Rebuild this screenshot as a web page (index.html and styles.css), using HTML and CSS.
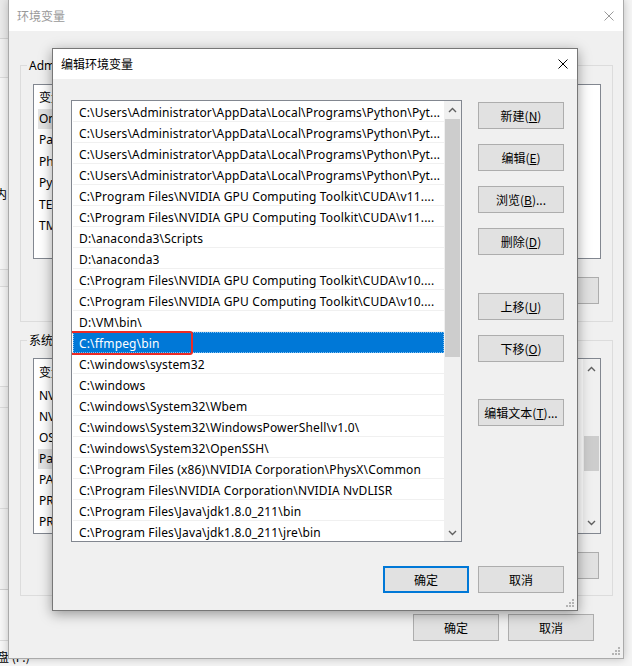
FILE: index.html
```html
<!DOCTYPE html>
<html lang="zh-CN">
<head>
<meta charset="utf-8">
<title>编辑环境变量</title>
<link rel="stylesheet" href="styles.css">
</head>
<body>
<div class="desktop">

  <div class="bgwin">
    <div class="bg-r bg-r1"></div>
    <div class="bg-r bg-r2"></div>
    <div class="bg-r bg-r3"><span class="bg-txt">内</span></div>
    <div class="bg-r bg-r4"></div>
    <div class="bg-r bg-r5"></div>
    <div class="bg-r bg-r6"></div>
    <div class="bg-r bg-r7"></div>
    <div class="bg-r bg-r8"></div>
    <div class="bg-r bg-r9"></div>
    <div class="bg-r bg-r10"><span class="bg-txt">盘 (F:)</span></div>
  </div>

  <section class="win outer">
    <header class="tbar tbar-off">
      <span class="ttl">环境变量</span>
      <svg class="xbtn" width="10" height="10" viewBox="0 0 10 10"><path d="M0.5 0.5L9.5 9.5M9.5 0.5L0.5 9.5" stroke="#9a9a9a" stroke-width="1"/></svg>
    </header>
    <div class="obody">
      <fieldset class="grp grp-user">
        <legend>Administrator 的用户变量(<u>U</u>)</legend>
        <div class="lv lv-user">
          <div class="lv-main">
            <div class="lv-head"><span class="c1">变量</span><span class="c2">值</span></div>
            <div class="lv-row lv-hl"><span class="c1">OneDrive</span><span class="c2">C:\Users\Administrator\OneDrive</span></div>
            <div class="lv-row"><span class="c1">Path</span><span class="c2">C:\Users\Administrator\AppData\Local\Programs\Python</span></div>
            <div class="lv-row"><span class="c1">PhpStorm</span><span class="c2">D:\PhpStorm\bin;</span></div>
            <div class="lv-row"><span class="c1">PyCharm</span><span class="c2">D:\PyCharm\bin;</span></div>
            <div class="lv-row"><span class="c1">TEMP</span><span class="c2">%USERPROFILE%\AppData\Local\Temp</span></div>
            <div class="lv-row"><span class="c1">TMP</span><span class="c2">%USERPROFILE%\AppData\Local\Temp</span></div>
          </div>
        </div>
        <div class="gbtns">
          <button class="btn">新建(<u>N</u>)...</button>
          <button class="btn">编辑(<u>E</u>)...</button>
          <button class="btn">删除(<u>D</u>)</button>
        </div>
      </fieldset>

      <fieldset class="grp grp-sys">
        <legend>系统变量(<u>S</u>)</legend>
        <div class="lv lv-sys">
          <div class="lv-main">
            <div class="lv-head"><span class="c1">变量</span><span class="c2">值</span></div>
            <div class="lv-row"><span class="c1">NVCUDASAMPLES_ROOT</span><span class="c2">C:\ProgramData\NVIDIA Corporation</span></div>
            <div class="lv-row"><span class="c1">NVCUDASAMPLES11_0_ROOT</span><span class="c2">C:\ProgramData\NVIDIA Corporation</span></div>
            <div class="lv-row"><span class="c1">OS</span><span class="c2">Windows_NT</span></div>
            <div class="lv-row lv-hl"><span class="c1">Path</span><span class="c2">C:\Program Files\NVIDIA GPU Computing Toolkit</span></div>
            <div class="lv-row"><span class="c1">PATHEXT</span><span class="c2">.COM;.EXE;.BAT;.CMD;.VBS;.VBE;.JS</span></div>
            <div class="lv-row"><span class="c1">PROCESSOR_ARCHITECTURE</span><span class="c2">AMD64</span></div>
            <div class="lv-row"><span class="c1">PROCESSOR_IDENTIFIER</span><span class="c2">Intel64 Family 6</span></div>
          </div>
          <div class="osb">
            <div class="osb-arrow"><svg width="9" height="6" viewBox="0 0 9 6"><path d="M1 5L4.5 1.5L8 5" fill="none" stroke="#606060" stroke-width="1.4"/></svg></div>
            <div class="osb-track"><div class="osb-thumb"></div></div>
            <div class="osb-arrow"><svg width="9" height="6" viewBox="0 0 9 6"><path d="M1 1L4.5 4.5L8 1" fill="none" stroke="#606060" stroke-width="1.4"/></svg></div>
          </div>
        </div>
        <div class="gbtns">
          <button class="btn">新建(<u>W</u>)...</button>
          <button class="btn">编辑(<u>I</u>)...</button>
          <button class="btn">删除(<u>L</u>)</button>
        </div>
      </fieldset>

      <div class="ofoot">
        <button class="btn">确定</button>
        <button class="btn">取消</button>
      </div>
    </div>
    <svg class="grip" width="10" height="10" viewBox="0 0 10 10" fill="#b4b4b4"><rect x="7" y="1" width="2" height="2"/><rect x="4" y="4" width="2" height="2"/><rect x="7" y="4" width="2" height="2"/><rect x="1" y="7" width="2" height="2"/><rect x="4" y="7" width="2" height="2"/><rect x="7" y="7" width="2" height="2"/></svg>
  </section>

  <section class="win dlg">
    <header class="tbar">
      <span class="ttl">编辑环境变量</span>
      <svg class="xbtn" width="10" height="10" viewBox="0 0 10 10"><path d="M0.5 0.5L9.5 9.5M9.5 0.5L0.5 9.5" stroke="#000" stroke-width="1"/></svg>
    </header>
    <div class="dbody">
      <div class="dmain">
        <div class="plist">
          <div class="prows">
            <div class="prow">C:\Users\Administrator\AppData\Local\Programs\Python\Pyt...</div>
            <div class="prow">C:\Users\Administrator\AppData\Local\Programs\Python\Pyt...</div>
            <div class="prow">C:\Users\Administrator\AppData\Local\Programs\Python\Pyt...</div>
            <div class="prow">C:\Users\Administrator\AppData\Local\Programs\Python\Pyt...</div>
            <div class="prow">C:\Program Files\NVIDIA GPU Computing Toolkit\CUDA\v11....</div>
            <div class="prow">C:\Program Files\NVIDIA GPU Computing Toolkit\CUDA\v11....</div>
            <div class="prow">D:\anaconda3\Scripts</div>
            <div class="prow">D:\anaconda3</div>
            <div class="prow">C:\Program Files\NVIDIA GPU Computing Toolkit\CUDA\v10....</div>
            <div class="prow">C:\Program Files\NVIDIA GPU Computing Toolkit\CUDA\v10....</div>
            <div class="prow">D:\VM\bin\</div>
            <div class="prow psel">C:\ffmpeg\bin<span class="mark"></span></div>
            <div class="prow">C:\windows\system32</div>
            <div class="prow">C:\windows</div>
            <div class="prow">C:\windows\System32\Wbem</div>
            <div class="prow">C:\windows\System32\WindowsPowerShell\v1.0\</div>
            <div class="prow">C:\windows\System32\OpenSSH\</div>
            <div class="prow">C:\Program Files (x86)\NVIDIA Corporation\PhysX\Common</div>
            <div class="prow">C:\Program Files\NVIDIA Corporation\NVIDIA NvDLISR</div>
            <div class="prow">C:\Program Files\Java\jdk1.8.0_211\bin</div>
            <div class="prow">C:\Program Files\Java\jdk1.8.0_211\jre\bin</div>
          </div>
          <div class="psb">
            <div class="sb-arrow"><svg width="9" height="6" viewBox="0 0 9 6"><path d="M1 5L4.5 1.5L8 5" fill="none" stroke="#606060" stroke-width="1.4"/></svg></div>
            <div class="sb-track"><div class="sb-thumb"></div></div>
            <div class="sb-arrow"><svg width="9" height="6" viewBox="0 0 9 6"><path d="M1 1L4.5 4.5L8 1" fill="none" stroke="#606060" stroke-width="1.4"/></svg></div>
          </div>
        </div>
        <div class="pbtns">
          <button class="btn">新建(<u>N</u>)</button>
          <button class="btn">编辑(<u>E</u>)</button>
          <button class="btn">浏览(<u>B</u>)...</button>
          <button class="btn">删除(<u>D</u>)</button>
          <button class="btn gap-a">上移(<u>U</u>)</button>
          <button class="btn">下移(<u>O</u>)</button>
          <button class="btn gap-b">编辑文本(<u>T</u>)...</button>
        </div>
      </div>
      <div class="dfoot">
        <button class="btn btn-def">确定</button>
        <button class="btn">取消</button>
      </div>
    </div>
    <svg class="grip" width="10" height="10" viewBox="0 0 10 10" fill="#b4b4b4"><rect x="7" y="1" width="2" height="2"/><rect x="4" y="4" width="2" height="2"/><rect x="7" y="4" width="2" height="2"/><rect x="1" y="7" width="2" height="2"/><rect x="4" y="7" width="2" height="2"/><rect x="7" y="7" width="2" height="2"/></svg>
  </section>

</div>
</body>
</html>
```

FILE: styles.css
```css
* { box-sizing: border-box; }
html, body { margin: 0; padding: 0; }
body {
  width: 632px;
  height: 666px;
  overflow: hidden;
  background: #f4f4f4;
  font-family: "Noto Sans", "Noto Sans CJK SC", sans-serif;
  font-size: 12px;
  color: #000;
}
u { text-decoration: underline; text-underline-offset: 1px; }

.desktop { position: relative; width: 632px; height: 666px; overflow: hidden; }

/* background window strip on the left */
.bgwin {
  position: absolute;
  left: -300px;
  top: 0;
  width: 360px;
  height: 666px;
  background: #f0f0f0;
  display: flex;
  flex-direction: column;
}
.bg-r { border-bottom: 1px solid #dadada; padding-left: 295px; line-height: 16px; white-space: nowrap; }
.bg-r1 { height: 39px; background: #e9e9e9; border-bottom-color: #d2d2d2; }
.bg-r2 { height: 40px; background: #f0f0f0; }
.bg-r3 { height: 193px; background: #f5f5f5; padding-top: 108px; }
.bg-r4 { height: 17px; background: #f0f0f0; }
.bg-r5 { height: 101px; background: #f5f5f5; }
.bg-r6 { height: 21px; background: #f0f0f0; }
.bg-r7 { height: 102px; background: #f0f0f0; }
.bg-r8 { height: 82px; background: #f0f0f0; border-bottom-color: #cfcfcf; }
.bg-r9 { height: 52px; background: #f6f6f6; }
.bg-r10 { flex: 1; background: #f6f6f6; border-bottom: 0; padding-left: 297px; padding-top: 8px; }
.bg-txt { font-family: "Noto Sans CJK SC", sans-serif; font-size: 12px; color: #000; }

/* windows */
.win {
  position: absolute;
  display: flex;
  flex-direction: column;
  background: #f0f0f0;
}
.outer {
  left: 8px;
  top: 0;
  width: 616px;
  height: 659px;
  border: 1px solid #aaaaaa;
  border-top: 0;
  box-shadow: 0 0 8px rgba(0,0,0,0.22);
}
.dlg {
  left: 52px;
  top: 48px;
  width: 526px;
  height: 563px;
  border: 1px solid #777777;
  box-shadow: 0 3px 12px rgba(0,0,0,0.38);
}

.tbar {
  flex: none;
  height: 30px;
  background: #fff;
  display: flex;
  align-items: center;
  justify-content: space-between;
  padding: 0 9px 0 8px;
  font-family: "Noto Sans CJK SC", sans-serif;
  font-size: 12px;
}
.tbar-off { height: 31px; padding-left: 8px; color: #999; }
.ttl { line-height: 16px; }
.xbtn { display: block; }

.grip { position: absolute; right: 2px; bottom: 2px; }

/* buttons */
.btn {
  flex: none;
  width: 86px;
  height: 27px;
  margin: 0;
  padding: 0;
  background: #e1e1e1;
  border: 1px solid #adadad;
  font-family: "Noto Sans CJK SC", sans-serif;
  font-size: 12px;
  line-height: 16px;
  color: #000;
}
.btn-def { border: 2px solid #0078d7; }

/* outer window body */
.obody {
  flex: 1;
  display: flex;
  flex-direction: column;
  padding: 0;
}
.grp {
  margin: 26px 10px 0 11px;
  padding: 0 11px 17px 12px;
  border: 1px solid #dcdcdc;
  min-width: 0;
  display: flex;
  flex-direction: column;
}
.grp legend {
  margin-left: -6px;
  padding: 0 2px;
  line-height: 17px;
  font-family: "Noto Sans", "Noto Sans CJK SC", sans-serif;
  font-size: 12px;
}
.grp-sys { margin-top: 10px; padding-bottom: 16px; }

.lv {
  flex: none;
  background: #fff;
  border: 1px solid #828790;
  display: flex;
  overflow: hidden;
}
.lv-user { margin-top: 10px; height: 175px; }
.lv-sys { margin-top: 9px; height: 176px; }
.lv-main { flex: 1; min-width: 0; }
.lv-head { display: flex; height: 23px; align-items: center; padding-left: 5px; }
.lv-sys .lv-head { height: 26px; }
.lv-row { display: flex; height: 21.5px; align-items: center; margin-left: 4px; white-space: nowrap; }
.lv-sys .lv-row { height: 21px; }
.lv-row .c1 { padding-left: 1px; height: 20px; line-height: 20px; }
.lv-hl .c1 { background: #e3e3e3; }
.c1 { width: 170px; flex: none; overflow: hidden; }
.c2 { flex: 1; overflow: hidden; padding-left: 6px; }

.osb { flex: none; width: 17px; background: #f0f0f0; display: flex; flex-direction: column; margin-left: 2px; }
.osb-arrow { flex: none; height: 20px; display: flex; align-items: center; justify-content: center; }
.osb-track { flex: 1; padding: 57px 1px 0 1px; }
.osb-thumb { height: 35px; background: #cdcdcd; }

.gbtns { display: flex; justify-content: flex-end; gap: 10px; margin-top: 18px; margin-right: 2px; }

.ofoot { display: flex; justify-content: flex-end; gap: 9px; margin: 18px 29px 0 0; }

/* dialog body */
.dbody {
  flex: 1;
  padding: 21px 13px 0 18px;
  display: flex;
  flex-direction: column;
}
.dmain { display: flex; gap: 16px; align-items: flex-start; }
.plist {
  width: 391px;
  height: 442px;
  flex: none;
  background: #fff;
  border: 1px solid #828790;
  display: flex;
  overflow: hidden;
}
.prows { flex: 1; min-width: 0; padding-left: 1px; }
.prow {
  height: 21px;
  line-height: 19px;
  padding-top: 2px;
  border-bottom: 1px solid #f0f0f0;
  padding-left: 6px;
  white-space: nowrap;
  overflow: hidden;
  letter-spacing: 0.15px;
  font-family: "Noto Sans", "Noto Sans CJK SC", sans-serif;
  font-size: 12px;
}
.psel {
  position: relative;
  overflow: visible;
  background: #0078d7;
  color: #fff;
  border-bottom-color: #0078d7;
  outline: 1px dotted #7fc0f2;
  outline-offset: -1px;
}
.mark {
  position: absolute;
  left: -3px;
  top: -1px;
  width: 123px;
  height: 24px;
  border: 2px solid #ec2b24;
  border-radius: 3px;
}
.psb { flex: none; width: 17px; background: #f0f0f0; display: flex; flex-direction: column; }
.sb-arrow { flex: none; height: 17px; display: flex; align-items: center; justify-content: center; }
.sb-track { flex: 1; padding: 1px 1px 0 1px; }
.sb-thumb { height: 238px; background: #cdcdcd; }

.pbtns { width: 86px; flex: none; display: flex; flex-direction: column; padding-top: 2px; gap: 15px; }
.pbtns .gap-a { margin-top: 23px; }
.pbtns .gap-b { margin-top: 22px; }

.dfoot { display: flex; justify-content: flex-end; gap: 9px; margin-top: 24px; }
```
